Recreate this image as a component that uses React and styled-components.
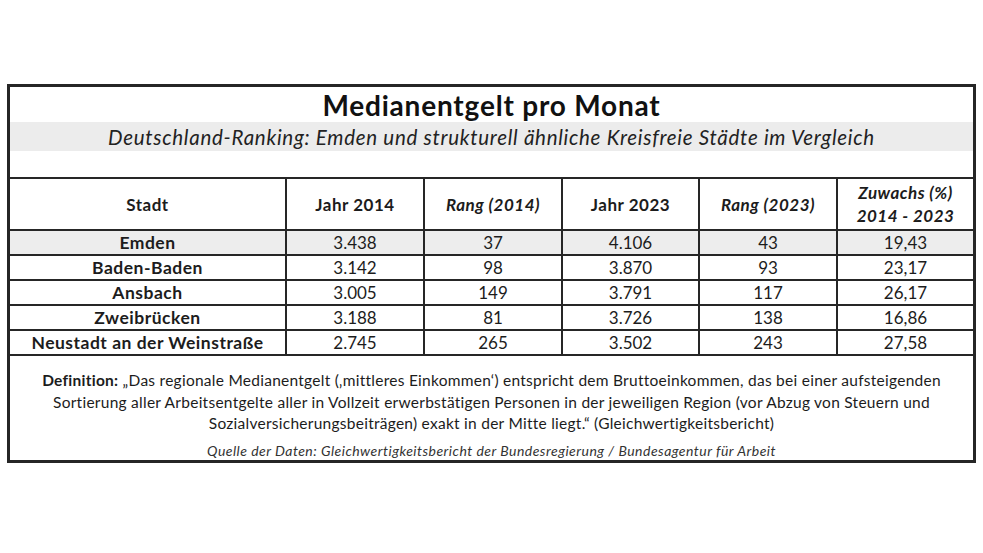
import React from 'react'
import styled, { createGlobalStyle } from 'styled-components'

const GlobalStyle = createGlobalStyle`
  html, body {
    margin: 0;
    padding: 0;
    background: #ffffff;
  }
  body {
    font-family: Lato, "Open Sans", sans-serif;
    color: #1c1c1c;
  }
`

const rows = [
  { stadt: 'Emden', j14: '3.438', r14: '37', j23: '4.106', r23: '43', zw: '19,43', highlight: true },
  { stadt: 'Baden-Baden', j14: '3.142', r14: '98', j23: '3.870', r23: '93', zw: '23,17' },
  { stadt: 'Ansbach', j14: '3.005', r14: '149', j23: '3.791', r23: '117', zw: '26,17' },
  { stadt: 'Zweibrücken', j14: '3.188', r14: '81', j23: '3.726', r23: '138', zw: '16,86' },
  { stadt: 'Neustadt an der Weinstraße', j14: '2.745', r14: '265', j23: '3.502', r23: '243', zw: '27,58' },
]

const colWidths = [276, 138, 138, 137, 138, 136]

export default function App() {
  return <Page>
    <GlobalStyle />
    <Frame>
      <Title>Medianentgelt pro Monat</Title>
      <Subtitle>Deutschland-Ranking: Emden und strukturell ähnliche Kreisfreie Städte im Vergleich</Subtitle>
      <Spacer />
      <Table>
        <colgroup>
          {colWidths.map((w, i) => <col key={i} style={{ width: w }} />)}
        </colgroup>
        <thead>
          <tr>
            <Th>Stadt</Th>
            <Th>Jahr 2014</Th>
            <Th italic>Rang (2014)</Th>
            <Th>Jahr 2023</Th>
            <Th italic>Rang (2023)</Th>
            <Th italic>Zuwachs (%)<br />2014 - 2023</Th>
          </tr>
        </thead>
        <tbody>
          {rows.map(r => <Row key={r.stadt} highlight={r.highlight}>
            <CityCell>{r.stadt}</CityCell>
            <Td>{r.j14}</Td>
            <Td>{r.r14}</Td>
            <Td>{r.j23}</Td>
            <Td>{r.r23}</Td>
            <Td>{r.zw}</Td>
          </Row>)}
        </tbody>
      </Table>
      <Footer>
        <Definition>
          <b>Definition:</b> „Das regionale Medianentgelt (‚mittleres Einkommen‘) entspricht dem Bruttoeinkommen, das bei einer aufsteigenden<br />
          Sortierung aller Arbeitsentgelte aller in Vollzeit erwerbstätigen Personen in der jeweiligen Region (vor Abzug von Steuern und<br />
          Sozialversicherungsbeiträgen) exakt in der Mitte liegt.“ (Gleichwertigkeitsbericht)
        </Definition>
        <Source>Quelle der Daten: Gleichwertigkeitsbericht der Bundesregierung / Bundesagentur für Arbeit</Source>
      </Footer>
    </Frame>
  </Page>
}

const Page = styled.div`
  width: 983px;
  height: 553px;
  padding-top: 84px;
  padding-left: 7px;
  box-sizing: border-box;
`

const Frame = styled.div`
  width: 969px;
  border: 3px solid #262626;
  box-sizing: border-box;
`

const Title = styled.div`
  height: 35px;
  display: flex;
  align-items: center;
  justify-content: center;
  font-size: 28px;
  font-weight: 700;
  letter-spacing: 0.8px;
  color: #111;
`

const Subtitle = styled.div`
  height: 29px;
  display: flex;
  align-items: center;
  justify-content: center;
  background: #ececec;
  font-size: 20.5px;
  font-style: italic;
  color: #222;
  letter-spacing: 0.72px;
`

const Spacer = styled.div`
  height: 26px;
  border-bottom: 2px solid #262626;
`

const Table = styled.table`
  width: 100%;
  border-collapse: collapse;
  table-layout: fixed;
`

const Th = styled.th`
  height: 50px;
  padding: 0;
  font-size: 17px;
  font-weight: 700;
  font-style: ${({ italic }) => italic ? 'italic' : 'normal'};
  letter-spacing: 0.5px;
  line-height: 23px;
  text-align: center;
  border-left: 2px solid #262626;
  border-bottom: 2px solid #262626;
  &:first-child { border-left: none; }
`

const Row = styled.tr`
  background: ${({ highlight }) => highlight ? '#ededed' : '#ffffff'};
`

const Td = styled.td`
  height: 23px;
  padding: 0;
  font-size: 17px;
  text-align: center;
  border-left: 2px solid #262626;
  border-bottom: 2px solid #262626;
`

const CityCell = styled(Td)`
  border-left: none;
  font-size: 17.5px;
  font-weight: 700;
  letter-spacing: 0.5px;
`

const Footer = styled.div`
  padding: 14px 0 0;
  text-align: center;
`

const Definition = styled.div`
  font-size: 15.5px;
  line-height: 21.5px;
  letter-spacing: 0.26px;
  color: #1c1c1c;
  b { font-weight: 700; }
`

const Source = styled.div`
  margin-top: 6px;
  height: 19px;
  line-height: 19px;
  font-size: 14px;
  font-style: italic;
  letter-spacing: 0.48px;
  color: #333;
`
